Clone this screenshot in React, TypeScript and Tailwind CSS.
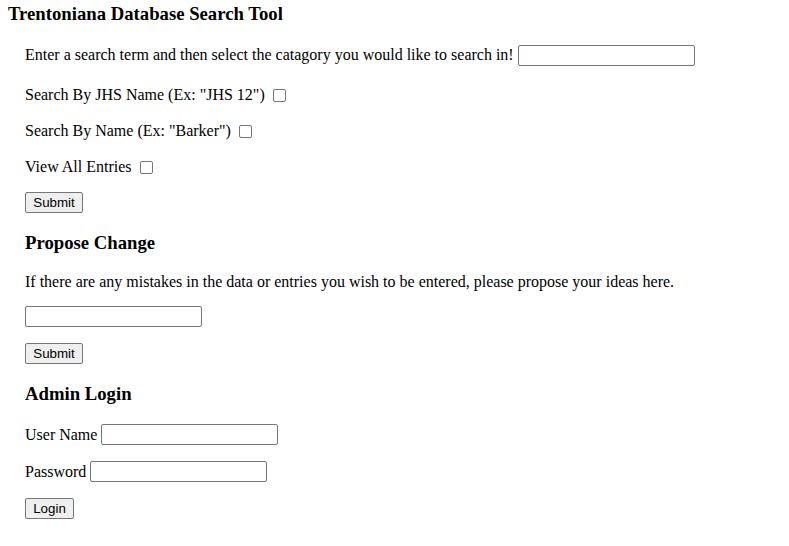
const serif = "font-['Liberation_Serif',_'Times_New_Roman',_serif]";

function TextBox({ type = "text" }: { type?: string }) {
  return (
    <input
      type={type}
      className="h-[21px] w-[177px] rounded-[2px] border border-[#767676] bg-white px-[2px] text-[13px] outline-none"
    />
  );
}

function Check() {
  return (
    <input
      type="checkbox"
      className="ml-[8px] h-[13px] w-[13px] appearance-none rounded-[2px] border border-[#767676] bg-white"
    />
  );
}

function Btn({ label, w }: { label: string; w: string }) {
  return (
    <button
      className={`flex h-[21px] ${w} items-center justify-center rounded-[2px] border border-[#767676] bg-[#efefef] font-['Liberation_Sans',_Arial,_sans-serif] text-[13.33px] text-black`}
    >
      {label}
    </button>
  );
}

function Heading({ children, className = "" }: { children: React.ReactNode; className?: string }) {
  return (
    <h3 className={`h-[22px] text-[18.72px] font-bold leading-[22px] text-black ${className}`}>
      {children}
    </h3>
  );
}

export default function App() {
  return (
    <div className={`min-h-[546px] bg-white pl-[8px] pt-[3px] text-[16px] text-black ${serif}`}>
      <Heading>Trentoniana Database Search Tool</Heading>

      <div className="pl-[17px]">
        <div className="mt-[19px] flex h-[22px] items-center">
          <span>Enter a search term and then select the catagory you would like to search in!</span>
          <span className="ml-[4px] flex">
            <TextBox />
          </span>
        </div>

        <div className="mt-[19px] flex h-[20px] items-center">
          <span>Search By JHS Name (Ex: "JHS 12")</span>
          <Check />
        </div>
        <div className="mt-[16px] flex h-[20px] items-center">
          <span>Search By Name (Ex: "Barker")</span>
          <Check />
        </div>
        <div className="mt-[16px] flex h-[20px] items-center">
          <span>View All Entries</span>
          <Check />
        </div>

        <div className="mt-[15px]">
          <Btn label="Submit" w="w-[58px]" />
        </div>

        <Heading className="mt-[19px]">Propose Change</Heading>
        <p className="mt-[18px] h-[20px] leading-[20px]">
          If there are any mistakes in the data or entries you wish to be entered, please propose your ideas here.
        </p>
        <div className="mt-[14px] flex">
          <TextBox />
        </div>
        <div className="mt-[16px]">
          <Btn label="Submit" w="w-[58px]" />
        </div>

        <Heading className="mt-[19px]">Admin Login</Heading>
        <div className="mt-[19px] flex h-[21px] items-center gap-[4px]">
          <span>User Name</span>
          <TextBox />
        </div>
        <div className="mt-[16px] flex h-[21px] items-center gap-[4px]">
          <span>Password</span>
          <TextBox type="password" />
        </div>
        <div className="mt-[16px]">
          <Btn label="Login" w="w-[49px]" />
        </div>
      </div>
    </div>
  );
}
